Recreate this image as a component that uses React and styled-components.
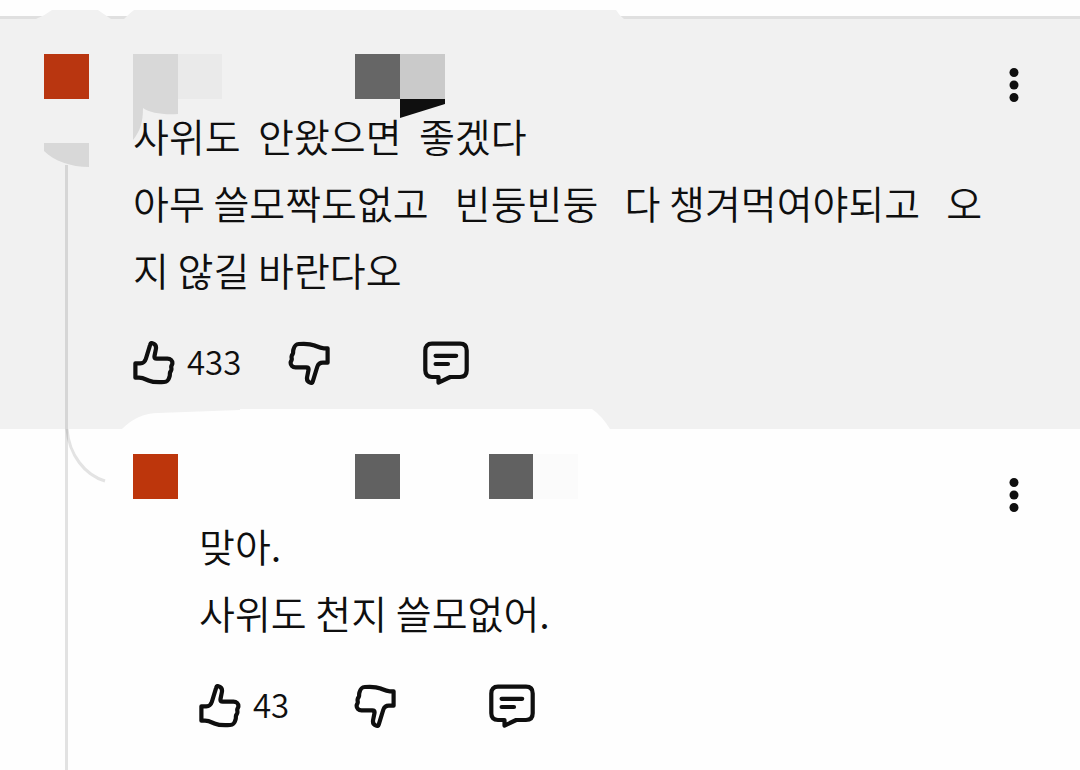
import React from "react";
import styled, { createGlobalStyle } from "styled-components";

const GlobalStyle = createGlobalStyle`
  * { box-sizing: border-box; }
  body {
    margin: 0;
    background: #fefefe;
    color: #0f0f0f;
    font-family: "Noto Sans CJK KR", "Noto Sans", sans-serif;
    font-weight: 350;
  }
`;

const Thread = styled.main`
  position: relative;
  padding-top: 16px;
`;

const Comment = styled.article`
  position: relative;
  display: grid;
  grid-template-columns: 45px minmax(0, 1fr) 24px;
  align-items: start;
  padding: ${(p) => (p.$reply ? "25px 54px 42px 133px" : "35px 54px 44px 44px")};
  background: ${(p) => (p.$reply ? "#fefefe" : "#f1f1f1")};
  border-top: ${(p) => (p.$reply ? "0" : "3px solid #e0e0e0")};
`;

const AvatarColumn = styled.div`
  display: flex;
  flex-direction: column;
  gap: 44px;
`;

const Avatar = styled.div`
  width: 45px;
  height: 45px;
  background: ${(p) => p.$color};
`;

const Content = styled.div`
  min-width: 0;
  margin-left: ${(p) => (p.$reply ? "21px" : "44px")};
`;

const NameRow = styled.header`
  height: 45px;
  margin-bottom: ${(p) => (p.$reply ? "13px" : "3px")};
  svg {
    display: block;
    overflow: visible;
  }
`;

const Message = styled.p`
  margin: 0 0 38px;
  font-size: 39px;
  line-height: 67px;
  white-space: pre-wrap;
`;

const Actions = styled.div`
  display: grid;
  grid-template-columns: 155px 135px auto;
  justify-content: start;
  justify-items: start;
  height: 44px;
`;

const ActionButton = styled.button`
  display: flex;
  align-items: flex-start;
  gap: 12px;
  height: 44px;
  padding: 0;
  border: 0;
  background: none;
  color: inherit;
  font: inherit;
  font-size: 33px;
  line-height: 40px;
  cursor: pointer;
`;

const MenuButton = styled.button`
  width: 24px;
  height: 36px;
  margin-top: ${(p) => (p.$reply ? "23px" : "13px")};
  padding: 0;
  border: 0;
  background: none;
  color: inherit;
  cursor: pointer;
  svg { display: block; }
`;

const ThreadLine = styled.div`
  position: absolute;
  top: 165px;
  bottom: 0;
  left: 65px;
  width: 3px;
  background: rgba(0, 0, 0, 0.11);
`;

const EdgeArt = styled.svg`
  position: absolute;
  left: 0;
  top: ${(p) => p.$top};
  pointer-events: none;
`;

function Thumb({ down }) {
  return (
    <svg width="42" height="44" viewBox="0 0 42 44" fill="none" stroke="currentColor" strokeWidth="4.2" strokeLinejoin="round" aria-hidden="true">
      <path
        transform={down ? "rotate(180 21 22)" : undefined}
        d="M2.4 22.3H7.2C10.6 22.3 12 20.6 12.8 18L17.2 3.6C17.7 1.8 18.8 1.9 20 2.4C22.6 3.4 23.4 5.2 22.9 8L21.5 15C21.2 17 21.8 17.7 23.8 17.7H34.5C37.6 17.7 39.4 19.6 39.4 22.2C39.4 23.8 38.2 24.4 38.2 25.8C38.2 27 38.7 27.6 38.3 29C37.9 30.4 37 30.8 36.9 32.1C36.8 33.2 37 34 36.6 35.4C35.5 39.4 34.4 40.8 31.2 41C26.4 41.4 19.5 41.2 15.4 39.5C11.5 37.8 9.4 36.7 6 36.7H2.4Z"
      />
    </svg>
  );
}

function ReplyIcon() {
  return (
    <svg width="46" height="44" viewBox="0 0 46 44" fill="none" stroke="currentColor" strokeWidth="4.2" strokeLinejoin="round" strokeLinecap="round" aria-hidden="true">
      <path d="M9 2.7H37Q43.7 2.7 43.7 9.4V29.3Q43.7 36 37 36H27.2L15.5 41.6V36H9Q2.3 36 2.3 29.3V9.4Q2.3 2.7 9 2.7Z" />
      <path d="M12.6 14.8H33.2M12.6 23H25" />
    </svg>
  );
}

function Menu({ reply }) {
  return (
    <MenuButton type="button" aria-label="메뉴" $reply={reply}>
      <svg width="24" height="36" fill="currentColor" aria-hidden="true">
        <circle cx="12" cy="5.5" r="4.5" />
        <circle cx="12" cy="18" r="4.5" />
        <circle cx="12" cy="30.5" r="4.5" />
      </svg>
    </MenuButton>
  );
}

function ActionBar({ likes }) {
  return (
    <Actions>
      <ActionButton type="button">
        <Thumb />
        <span>{likes}</span>
      </ActionButton>
      <ActionButton type="button" aria-label="싫어요">
        <Thumb down />
      </ActionButton>
      <ActionButton type="button" aria-label="답글">
        <ReplyIcon />
      </ActionButton>
    </Actions>
  );
}

export default function App() {
  return (
    <>
      <GlobalStyle />
      <Thread>
        <Comment>
          <AvatarColumn>
            <Avatar $color="#b93610" />
            <svg width="45" height="24" aria-hidden="true">
              <path d="M0 0H45V24C27 24 10 18 0 8Z" fill="#d8d8d8" />
            </svg>
          </AvatarColumn>
          <Content>
            <NameRow>
              <svg width="312" height="45" aria-hidden="true">
                <path d="M0 0H45V60C30 61 17 59 10 54C10 69 7 77 0 86Z" fill="#d8d8d8" />
                <rect x="45" width="44" height="45" fill="#eaeaea" />
                <rect x="222" width="45" height="45" fill="#666" />
                <rect x="267" width="45" height="45" fill="#cacaca" />
                <path d="M267 45H312V50L267 64Z" fill="#0f0f0f" />
              </svg>
            </NameRow>
            <Message>
              {"사위도  안왔으면  좋겠다\n아무 쓸모짝도없고   빈둥빈둥   다 챙겨먹여야되고   오지 않길 바란다오"}
            </Message>
            <ActionBar likes="433" />
          </Content>
          <Menu />
        </Comment>

        <Comment $reply>
          <Avatar $color="#bd360c" />
          <Content $reply>
            <NameRow $reply>
              <svg width="379" height="45" aria-hidden="true">
                <rect x="156" width="45" height="45" fill="#616161" />
                <rect x="290" width="44" height="45" fill="#616161" />
                <rect x="334" width="45" height="45" fill="#fbfbfb" />
              </svg>
            </NameRow>
            <Message>{"맞아.\n사위도 천지 쓸모없어."}</Message>
            <ActionBar likes="43" />
          </Content>
          <Menu reply />
          <EdgeArt $top="-20px" width="620" height="76" aria-hidden="true">
            <path d="M122 20Q138 4 158 4L240 1V0H592Q602 7 610 20V21H122Z" fill="#fefefe" />
            <path d="M67 20C69 46 85 66 105 72" fill="none" stroke="#e3e3e3" strokeWidth="3" />
          </EdgeArt>
        </Comment>

        <EdgeArt $top="10px" width="630" height="9" aria-hidden="true">
          <path d="M36 9Q44 6 52 0H98L111 9ZM124 9Q130 3 134 0H616Q619 5 624 9Z" fill="#f1f1f1" />
        </EdgeArt>
        <ThreadLine />
      </Thread>
    </>
  );
}
